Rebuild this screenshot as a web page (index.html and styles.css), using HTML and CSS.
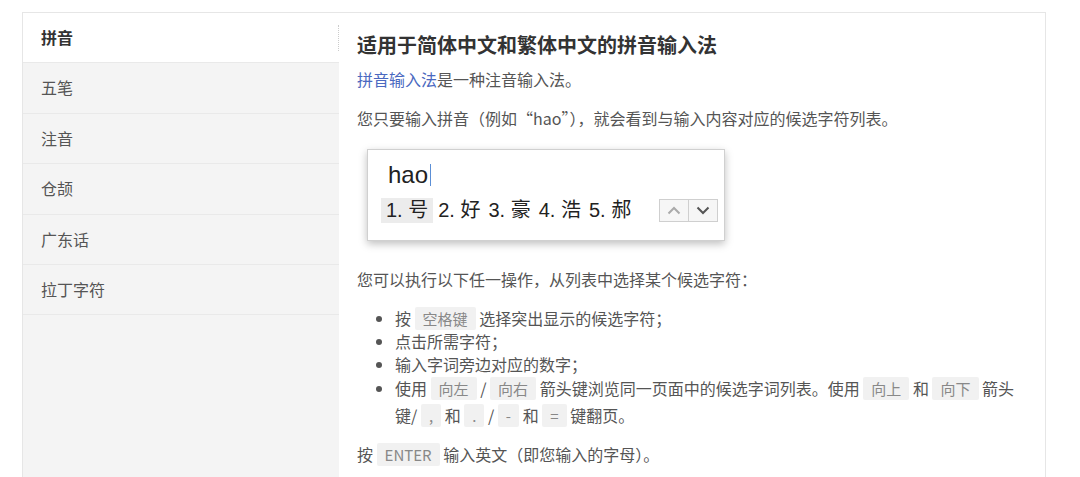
FILE: index.html
```html
<!DOCTYPE html>
<html lang="zh-CN">

<head>
    <meta charset="UTF-8">
    <meta name="viewport" content="width=device-width, initial-scale=1.0">
    <title>拼音输入法</title>
    <link rel="stylesheet" href="styles.css">
</head>

<body>
    <div class="panel">
        <ul class="side-menu">
            <li class="menu-item active">拼音</li>
            <li class="menu-item">五笔</li>
            <li class="menu-item">注音</li>
            <li class="menu-item">仓颉</li>
            <li class="menu-item">广东话</li>
            <li class="menu-item">拉丁字符</li>
        </ul>

        <div class="content">
            <h2 class="content-title">适用于简体中文和繁体中文的拼音输入法</h2>
            <p><a href="#" class="link">拼音输入法</a>是一种注音输入法。</p>
            <p>您只要输入拼音（例如“hao”），就会看到与输入内容对应的候选字符列表。</p>

            <div class="ime-box">
                <div class="ime-input">hao<span class="caret"></span></div>
                <div class="ime-row">
                    <span class="cand selected">1. 号</span>
                    <span class="cand">2. 好</span>
                    <span class="cand">3. 豪</span>
                    <span class="cand">4. 浩</span>
                    <span class="cand">5. 郝</span>
                    <div class="page-buttons">
                        <span class="page-btn">
                            <svg width="14" height="9" viewBox="0 0 14 9"><polyline points="1.5,7.5 7,2 12.5,7.5" fill="none" stroke="#aaa" stroke-width="2"/></svg>
                        </span>
                        <span class="page-btn">
                            <svg width="14" height="9" viewBox="0 0 14 9"><polyline points="1.5,1.5 7,7 12.5,1.5" fill="none" stroke="#555" stroke-width="2"/></svg>
                        </span>
                    </div>
                </div>
            </div>

            <p class="after-box">您可以执行以下任一操作，从列表中选择某个候选字符：</p>
            <ul class="steps">
                <li>按 <kbd>空格键</kbd> 选择突出显示的候选字符；</li>
                <li>点击所需字符；</li>
                <li>输入字词旁边对应的数字；</li>
                <li class="tall"><span>使用</span> <kbd>向左</kbd> / <kbd>向右</kbd> <span>箭头键浏览同一页面中的候选字词列表。使用</span> <kbd>向上</kbd> 和 <kbd>向下</kbd> <span>箭头</span><span>键/</span> <kbd>,</kbd> 和 <kbd>.</kbd> / <kbd>-</kbd> 和 <kbd>=</kbd> 键翻页。</li>
            </ul>
            <p>按 <kbd>ENTER</kbd> 输入英文（即您输入的字母）。</p>
        </div>
    </div>
</body>

</html>
```

FILE: styles.css
```css
body {
    margin: 0;
    background-color: #fff;
    font-family: "Noto Sans CJK SC", "Liberation Sans", sans-serif;
    color: #555;
}

.panel {
    display: flex;
    width: 1022px;
    height: 520px;
    margin: 12px 0 0 22px;
    border: 1px solid #e6e6e6;
}

.side-menu {
    list-style: none;
    margin: 0;
    padding: 0;
    width: 316px;
    flex-shrink: 0;
    background-color: #f4f4f4;
}

.menu-item {
    height: 49.4px;
    line-height: 48px;
    padding-left: 18px;
    font-size: 16px;
    color: #555;
    border-bottom: 1px solid #e9e9e9;
}

.menu-item.active {
    background-color: #fff;
    color: #333;
    font-weight: bold;
    position: relative;
}

.menu-item.active::after {
    content: "";
    position: absolute;
    right: 0;
    top: 12px;
    height: 26px;
    border-right: 1px dotted #ccc;
}

.content {
    flex: 1;
    padding: 0 30px 0 18px;
}

.content-title {
    margin: 19px 0 10px;
    font-size: 20px;
    line-height: 26px;
    color: #333;
}

.content p {
    margin: 0 0 16px;
    font-size: 16px;
    line-height: 23px;
}

.link {
    color: #4a68c0;
    text-decoration: none;
}

.ime-box {
    width: 356px;
    height: 90px;
    margin: 19px 0 0 10px;
    border: 1px solid #d0d0d0;
    background-color: #fff;
    box-shadow: 0 3px 8px rgba(0, 0, 0, 0.25);
}

.ime-input {
    padding: 10px 0 0 20px;
    height: 30px;
    font-family: "Liberation Sans", sans-serif;
    font-size: 24px;
    line-height: 30px;
    color: #222;
}

.caret {
    display: inline-block;
    width: 1px;
    height: 22px;
    margin-left: 2px;
    vertical-align: -3px;
    background-color: #5b8fd6;
}

.ime-row {
    display: flex;
    align-items: center;
    gap: 8px;
    margin: 8px 0 0 13px;
}

.cand {
    font-family: "Liberation Sans", "Noto Sans CJK SC", sans-serif;
    font-size: 20px;
    line-height: 25px;
    color: #222;
}

.cand.selected {
    padding: 0 5px;
    margin-right: -3px;
    background-color: #ececec;
}

.page-buttons {
    display: flex;
    margin-left: 20px;
    border: 1px solid #cfcfcf;
}

.page-btn {
    display: flex;
    align-items: center;
    justify-content: center;
    width: 28px;
    height: 21px;
    background-color: #f6f6f6;
}

.page-btn + .page-btn {
    border-left: 1px solid #cfcfcf;
}

.content p.after-box {
    margin-top: 27px;
}

.steps {
    margin: 0 0 14px;
    padding-left: 38px;
    font-size: 16px;
    line-height: 22.5px;
}

.steps li.tall {
    line-height: 27px;
}

kbd {
    display: inline-block;
    font-family: "Noto Sans CJK SC", "Liberation Sans", sans-serif;
    font-size: 15px;
    line-height: 21px;
    color: #888;
    background-color: #f1f1f1;
    padding: 1px 8px;
    border-radius: 2px;
}
```
